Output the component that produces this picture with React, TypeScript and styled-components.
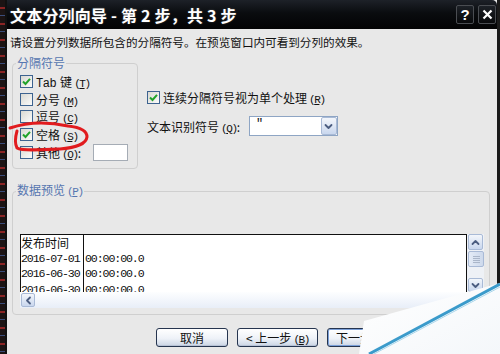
import React from "react";
import styled, { createGlobalStyle } from "styled-components";

const GlobalStyle = createGlobalStyle`
  html, body { margin: 0; padding: 0; background: #e8e8e8; }
  body { font-family: "Noto Sans CJK SC", "Noto Sans", sans-serif; color: #111; }
  #root { width: 500px; height: 354px; }
`;

const Screen = styled.div`
  position: relative;
  width: 500px;
  height: 354px;
  display: flex;
  overflow: hidden;
`;

const BackStrip = styled.div`
  width: 5px;
  background: repeating-linear-gradient(180deg, #1c1414 0 7px, #8a2424 7px 9px, #1c1414 9px 15px, #3a4d7a 15px 16px);
`;

const Window = styled.div`
  flex: 1;
  display: flex;
  flex-direction: column;
  border-left: 2px solid #101010;
  border-right: 3px solid #1a1a1a;
  min-width: 0;
`;

const TitleBar = styled.div`
  height: 29px;
  flex-shrink: 0;
  display: flex;
  align-items: center;
  justify-content: space-between;
  padding: 0 1px 0 3px;
  background: linear-gradient(180deg, #1d2128 0%, #0a0c0f 45%, #030304 100%);
  border-top-right-radius: 5px;
`;

const Title = styled.div`
  color: #fff;
  font-size: 16px;
  font-weight: 700;
  letter-spacing: 0.2px;
  white-space: pre;
  text-shadow: 0 0 2px rgba(255, 255, 255, 0.25);
`;

const Caps = styled.div`
  display: flex;
  gap: 4px;
`;

const CapButton = styled.div`
  width: 18px;
  height: 19px;
  box-sizing: border-box;
  border: 1px solid #4a4d52;
  border-radius: 2px;
  background: linear-gradient(180deg, #1d2127, #08090b);
  color: #fff;
  font: 700 15px "Liberation Sans", sans-serif;
  display: flex;
  align-items: center;
  justify-content: center;
`;

const Body = styled.div`
  flex: 1;
  background: #e8e8e8;
  padding: 5px 7px 0 5px;
  display: flex;
  flex-direction: column;
`;

const Instruction = styled.div`
  margin-left: -2px;
  font-size: 11.6px;
  line-height: 16px;
  white-space: nowrap;
`;

const TopSection = styled.div`
  margin-top: 6px;
  display: flex;
  align-items: flex-start;
  gap: 9px;
`;

const Group = styled.fieldset<{ $w?: number; $pt: number; $pb: number }>`
  margin: 0;
  width: ${(p) => (p.$w ? `${p.$w}px` : "auto")};
  box-sizing: border-box;
  border: 1px solid #cfcfcf;
  border-radius: 4px;
  padding: ${(p) => p.$pt}px 5px ${(p) => p.$pb}px 7px;
  min-width: 0;
`;

const Legend = styled.legend`
  margin-left: -4px;
  padding: 0 1px;
  font-size: 12px;
  line-height: 14px;
  color: #5676b0;
  white-space: nowrap;
`;

const CheckRow = styled.label<{ $h?: number }>`
  display: flex;
  align-items: center;
  gap: 3px;
  height: ${(p) => p.$h ?? 17.5}px;
  font-size: 12px;
  white-space: nowrap;
`;

const Box = styled.span`
  width: 11px;
  height: 11px;
  flex-shrink: 0;
  border: 1px solid #3d6390;
  background: linear-gradient(135deg, #d9d9d2, #fbfbfb);
  display: inline-flex;
  align-items: center;
  justify-content: center;
`;

const Latin = styled.span`
  font-family: "Liberation Mono", monospace;
  font-size: 12px;
  letter-spacing: -0.5px;
  margin-right: 4px;
`;

const Key = styled.span`
  font-family: "Liberation Mono", monospace;
  font-size: 11px;
  letter-spacing: -1.4px;
  margin-left: 2px;
`;

const SmallInput = styled.span`
  width: 35px;
  height: 17px;
  box-sizing: border-box;
  border: 1px solid #a5acb5;
  background: #fff;
  margin-left: 9px;
`;

const RightColumn = styled.div`
  margin-top: 32px;
  display: flex;
  flex-direction: column;
  gap: 10px;
`;

const ComboRow = styled.div`
  display: flex;
  align-items: center;
  gap: 9px;
  font-size: 12px;
  white-space: nowrap;
`;

const Combo = styled.div`
  width: 89px;
  height: 20px;
  box-sizing: border-box;
  border: 1px solid #8ea5c4;
  background: #fff;
  display: flex;
  justify-content: space-between;
  font-family: "Liberation Mono", monospace;
  font-size: 12px;
  line-height: 15px;
  padding-left: 6px;
`;

const ArrowButton = styled.span<{ $w?: number; $h?: number }>`
  width: ${(p) => p.$w ?? 16}px;
  height: ${(p) => p.$h ?? 18}px;
  box-sizing: border-box;
  flex-shrink: 0;
  border: 1px solid #a9bad6;
  border-radius: 2px;
  background: linear-gradient(180deg, #f3f6fb 0%, #c9d7ee 100%);
  display: flex;
  align-items: center;
  justify-content: center;
`;

const PreviewGroupWrap = styled.div`
  margin-top: 14px;
`;

const Preview = styled.div`
  display: grid;
  grid-template-columns: 1fr 17px;
  grid-template-rows: 58px 16px;
`;

const List = styled.div`
  background: #fff;
  border: 1px solid #111;
  border-bottom: none;
  overflow: hidden;
  font-family: "Liberation Mono", monospace;
`;

const PreviewRow = styled.div`
  display: flex;
  height: 15.6px;
  line-height: 15.6px;
  font-size: 11.6px;
  letter-spacing: -1.1px;
  white-space: nowrap;
`;

const Cell = styled.div<{ $w?: number; $cjk?: boolean }>`
  box-sizing: border-box;
  width: ${(p) => (p.$w ? `${p.$w}px` : "auto")};
  flex: ${(p) => (p.$w ? "none" : 1)};
  border-right: ${(p) => (p.$w ? "1px solid #111" : "none")};
  padding-left: ${(p) => (p.$w ? 0 : 1)}px;
  font-family: ${(p) => (p.$cjk ? `"Noto Sans CJK SC", sans-serif` : "inherit")};
  letter-spacing: ${(p) => (p.$cjk ? "0" : "inherit")};
  font-size: ${(p) => (p.$cjk ? "12px" : "inherit")};
`;

const VScroll = styled.div`
  padding: 0 0 0 1px;
  display: flex;
  flex-direction: column;
  justify-content: space-between;
  background: #eef1f6;
`;

const Thumb = styled.div`
  height: 16px;
  margin-top: 1px;
  box-sizing: border-box;
  border: 1px solid #a9bad6;
  border-radius: 2px;
  background: linear-gradient(90deg, #e4ebf6, #cdd9ec);
  display: flex;
  align-items: center;
  justify-content: center;
`;

const Grip = styled.div`
  width: 7px;
  height: 7px;
  background: repeating-linear-gradient(180deg, #aab6c9 0 1px, transparent 1px 2px);
`;

const HScroll = styled.div`
  grid-column: 1 / 3;
  background: linear-gradient(180deg, #fdfeff, #e8eef8);
  padding: 1px 0 0 1px;
`;

const Footer = styled.div`
  margin-top: 13px;
  padding-left: 144px;
  display: flex;
  gap: 9px;
`;

const Button = styled.div<{ $w: number; $default?: boolean }>`
  width: ${(p) => p.$w}px;
  height: 19px;
  box-sizing: border-box;
  border: 1px solid #26354f;
  border-radius: 3px;
  background: linear-gradient(180deg, #ffffff 0%, #eef2f8 55%, #cbd5e4 100%);
  box-shadow: ${(p) => (p.$default ? "inset 0 0 0 1px #7a9fd8" : "inset 0 -1px 0 #b8c3d6")};
  font-size: 12px;
  line-height: 17px;
  text-align: center;
  white-space: nowrap;
`;

const Overlay = styled.svg`
  position: absolute;
  pointer-events: none;
`;

const Chevron = ({ dir }: { dir: "up" | "down" | "left" }) => {
  const d =
    dir === "up" ? "M2.5 7 L5.5 4 L8.5 7" : dir === "down" ? "M2.5 4 L5.5 7 L8.5 4" : "M7 2.5 L4 5.5 L7 8.5";
  return (
    <svg width="11" height="11" viewBox="0 0 11 11">
      <path d={d} fill="none" stroke="#4b5d80" strokeWidth="1.8" strokeLinecap="round" strokeLinejoin="round" />
    </svg>
  );
};

const Check = () => (
  <svg width="9" height="9" viewBox="0 0 9 9">
    <path d="M1 4.5 L3.5 7 L8 1.8" fill="none" stroke="#21a32a" strokeWidth="2" />
  </svg>
);

const CheckBox = ({ on }: { on?: boolean }) => <Box>{on && <Check />}</Box>;

const Hot = ({ k }: { k: string }) => (
  <Key>
    (<u>{k}</u>)
  </Key>
);

const rows = [
  ["2016-07-01", "00:00:00.0"],
  ["2016-06-30", "00:00:00.0"],
  ["2016-06-30", "00:00:00.0"],
];

export default function App() {
  return (
    <Screen>
      <GlobalStyle />
      <BackStrip />
      <Window>
        <TitleBar>
          <Title>文本分列向导 - 第 2 步，共 3 步</Title>
          <Caps>
            <CapButton>?</CapButton>
            <CapButton>
              <svg width="11" height="11" viewBox="0 0 11 11">
                <path d="M1.5 1.5 L9.5 9.5 M9.5 1.5 L1.5 9.5" stroke="#fff" strokeWidth="2.2" />
              </svg>
            </CapButton>
          </Caps>
        </TitleBar>
        <Body>
          <Instruction>请设置分列数据所包含的分隔符号。在预览窗口内可看到分列的效果。</Instruction>
          <TopSection>
            <Group $w={126} $pt={3} $pb={6}>
              <Legend>分隔符号</Legend>
              <CheckRow>
                <CheckBox on />
                <span>
                  <Latin>Tab</Latin>键<Hot k="T" />
                </span>
              </CheckRow>
              <CheckRow>
                <CheckBox />
                <span>
                  分号<Hot k="M" />
                </span>
              </CheckRow>
              <CheckRow>
                <CheckBox />
                <span>
                  逗号<Hot k="C" />
                </span>
              </CheckRow>
              <CheckRow>
                <CheckBox on />
                <span>
                  空格<Hot k="S" />
                </span>
              </CheckRow>
              <CheckRow $h={19}>
                <CheckBox />
                <span>
                  其他<Hot k="O" />:
                </span>
                <SmallInput />
              </CheckRow>
            </Group>
            <RightColumn>
              <CheckRow $h={18}>
                <CheckBox on />
                <span>
                  连续分隔符号视为单个处理<Hot k="R" />
                </span>
              </CheckRow>
              <ComboRow>
                <span>
                  文本识别符号<Hot k="Q" />:
                </span>
                <Combo>
                  <span>"</span>
                  <ArrowButton>
                    <Chevron dir="down" />
                  </ArrowButton>
                </Combo>
              </ComboRow>
            </RightColumn>
          </TopSection>
          <PreviewGroupWrap>
            <Group $pt={35} $pb={6}>
              <Legend>
                数据预览<Hot k="P" />
              </Legend>
              <Preview>
                <List>
                  <PreviewRow>
                    <Cell $w={63} $cjk>
                      发布时间
                    </Cell>
                    <Cell />
                  </PreviewRow>
                  {rows.map(([d, t], i) => (
                    <PreviewRow key={i}>
                      <Cell $w={63}>{d}</Cell>
                      <Cell>{t}</Cell>
                    </PreviewRow>
                  ))}
                </List>
                <VScroll>
                  <div>
                    <ArrowButton $w={15} $h={16}>
                      <Chevron dir="up" />
                    </ArrowButton>
                    <Thumb>
                      <Grip />
                    </Thumb>
                  </div>
                  <ArrowButton $w={15} $h={14}>
                    <Chevron dir="down" />
                  </ArrowButton>
                </VScroll>
                <HScroll>
                  <ArrowButton $w={14} $h={14}>
                    <Chevron dir="left" />
                  </ArrowButton>
                </HScroll>
              </Preview>
            </Group>
          </PreviewGroupWrap>
          <Footer>
            <Button $w={72}>取消</Button>
            <Button $w={81}>
              &lt; 上一步<Hot k="B" />
            </Button>
            <Button $w={81} $default>
              下一步<Hot k="N" /> &gt;
            </Button>
            <Button $w={72}>
              完成<Hot k="F" />
            </Button>
          </Footer>
        </Body>
      </Window>

      {/* red pen annotation around 空格 */}
      <Overlay style={{ left: 0, top: 115 }} width="95" height="40" viewBox="0 115 95 40">
        <path
          d="M17 131 C15 138 15 144 17 148 C22 151 40 150 60 149 C75 148 86 144 87 137 C87 130 78 127 68 126 C50 122 30 121 10 128"
          fill="none"
          stroke="#e11b1e"
          strokeWidth="3"
          strokeLinecap="round"
          strokeLinejoin="round"
        />
      </Overlay>

      {/* page curl in the bottom-right corner */}
      <Overlay style={{ right: 0, bottom: 0 }} width="150" height="80" viewBox="350 274 150 80">
        <defs>
          <linearGradient id="flap" x1="0" y1="0" x2="1" y2="1">
            <stop offset="0" stopColor="#ffffff" />
            <stop offset="1" stopColor="#f4f7fa" />
          </linearGradient>
        </defs>
        <polygon points="359,354 364,321 500,283 500,354" fill="url(#flap)" />
        <line x1="369" y1="354" x2="500" y2="284" stroke="#3b9bcb" strokeWidth="3" />
        <line x1="374" y1="354" x2="500" y2="287" stroke="#a9d6ea" strokeWidth="1" />
      </Overlay>
    </Screen>
  );
}
